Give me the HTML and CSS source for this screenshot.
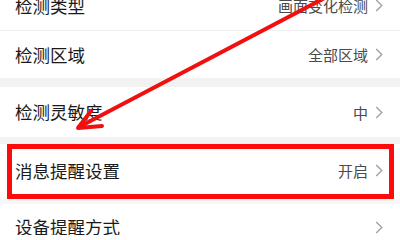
FILE: index.html
```html
<!DOCTYPE html>
<html lang="zh-CN">
<head>
<meta charset="utf-8">
<title>检测设置</title>
<link rel="stylesheet" href="styles.css">
</head>
<body>
<div class="screen">
  <div class="list">
    <div class="row row-first">
      <span class="label">检测类型</span>
      <span class="value">画面变化检测</span>
      <svg class="chev" viewBox="0 0 8 13"><polyline points="1.2,1 6.8,6.5 1.2,12"/></svg>
    </div>
    <div class="row row-second">
      <span class="label">检测区域</span>
      <span class="value">全部区域</span>
      <svg class="chev" viewBox="0 0 8 13"><polyline points="1.2,1 6.8,6.5 1.2,12"/></svg>
    </div>
    <div class="band band-a"></div>
    <div class="row row-third">
      <span class="label">检测灵敏度</span>
      <span class="value">中</span>
      <svg class="chev" viewBox="0 0 8 13"><polyline points="1.2,1 6.8,6.5 1.2,12"/></svg>
    </div>
    <div class="band band-b"></div>
    <div class="row row-highlight">
      <span class="label">消息提醒设置</span>
      <span class="value">开启</span>
      <svg class="chev" viewBox="0 0 8 13"><polyline points="1.2,1 6.8,6.5 1.2,12"/></svg>
    </div>
    <div class="band band-c"></div>
    <div class="row row-last">
      <span class="label">设备提醒方式</span>
      <span class="value"></span>
      <svg class="chev" viewBox="0 0 8 13"><polyline points="1.2,1 6.8,6.5 1.2,12"/></svg>
    </div>
  </div>
  <svg class="arrow" viewBox="0 0 400 235">
    <line x1="336" y1="-8" x2="79" y2="127"/>
    <polyline points="91,111 78,128 102,126"/>
  </svg>
</div>
</body>
</html>
```

FILE: styles.css
```css
html, body {
  margin: 0;
  padding: 0;
  background: #ffffff;
}

.screen {
  position: relative;
  width: 400px;
  height: 235px;
  overflow: hidden;
  background: #ffffff;
  font-family: "Noto Sans CJK SC", "Noto Sans", sans-serif;
}

.list {
  display: flex;
  flex-direction: column;
  margin-top: -19px;
}

.row {
  box-sizing: border-box;
  display: flex;
  align-items: center;
  padding: 0 17px 0 15px;
  background: #ffffff;
  position: relative;
}

.row-first {
  height: 50px;
  border-bottom: 1px solid #efefef;
}

.row-second {
  height: 47px;
}

.row-third {
  height: 50px;
}

.row-highlight {
  height: 55px;
  padding-bottom: 2px;
}

.row-highlight::after {
  content: "";
  position: absolute;
  left: 7px;
  right: 6px;
  top: 0;
  bottom: 0;
  border: 5px solid #ff0a0a;
}

.row-last {
  height: 46px;
}

.band {
  background: #f2f2f2;
}

.band-a {
  height: 9px;
}

.band-b {
  height: 7px;
}

.band-c {
  height: 5px;
  background: #f7f7f7;
}

.label {
  flex: 1;
  font-size: 17.5px;
  color: #1a1a1a;
  line-height: 1;
}

.value {
  font-size: 15px;
  color: #4a4a4a;
  line-height: 1;
  margin-right: 7px;
}

.chev {
  width: 8px;
  height: 13px;
  fill: none;
  stroke: #a2a2a2;
  stroke-width: 1.4;
}

.arrow {
  position: absolute;
  left: 0;
  top: 0;
  width: 400px;
  height: 235px;
  pointer-events: none;
  fill: none;
  stroke: #f01010;
  stroke-width: 4;
  stroke-linecap: round;
  stroke-linejoin: round;
}
```
